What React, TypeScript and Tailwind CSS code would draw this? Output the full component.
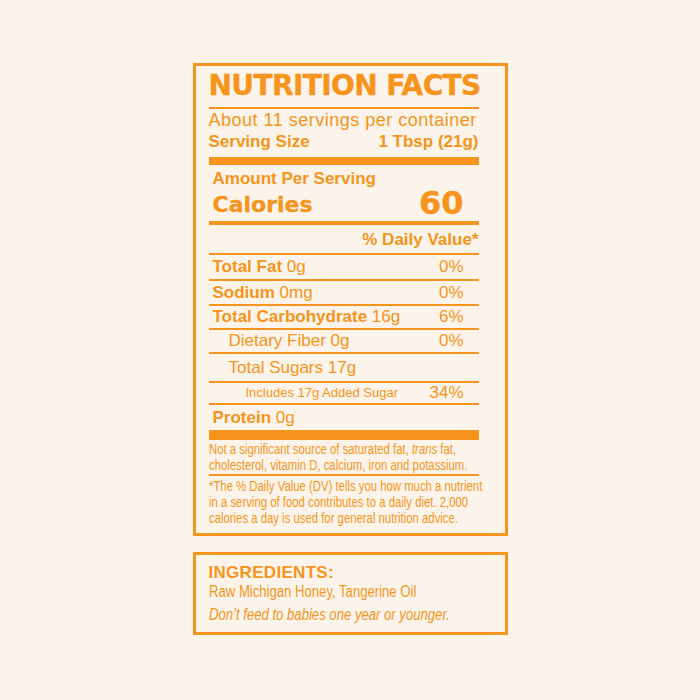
const orange = "text-[#f7941d]";

function Rule({ h = "h-[2px]" }: { h?: string }) {
  return <div className={`${h} bg-[#f7941d]`} />;
}

function Row({
  height,
  indent,
  children,
  pct,
}: {
  height: string;
  indent: string;
  children: React.ReactNode;
  pct?: string;
}) {
  return (
    <div className={`flex justify-between ${height} ${indent} pr-[15px]`}>
      <div>{children}</div>
      {pct && <div>{pct}</div>}
    </div>
  );
}

export default function App() {
  return (
    <div
      className={`w-[700px] h-[700px] bg-[#fcf4ea] flex flex-col items-center pt-[63px] gap-[16px] ${orange}`}
      style={{ fontFamily: '"Liberation Sans", Arial, sans-serif' }}
    >
      <div className="w-[315px] border-[3px] border-[#f7941d] pl-[13px] pr-[26px] pt-[4px] pb-[7px]">
        <div className="h-[32px] leading-[32px] text-[28px] font-bold tracking-[-0.6px] whitespace-nowrap font-['DejaVu_Sans',sans-serif] [-webkit-text-stroke:0.4px_#f7941d]">
          NUTRITION FACTS
        </div>
        <div className="h-[5px]" />
        <Rule />
        <div className="h-[22px] leading-[22px] text-[18px] tracking-[0.5px] whitespace-nowrap">
          About 11 servings per container
        </div>
        <div className="h-[22px] leading-[22px] text-[17px] font-bold flex justify-between whitespace-nowrap">
          <span>Serving Size</span>
          <span>1 Tbsp (21g)</span>
        </div>
        <div className="h-[4px]" />
        <Rule h="h-[8px]" />
        <div className="h-[28px] leading-[28px] text-[17px] font-bold pl-[4px]">
          Amount Per Serving
        </div>
        <div className="h-[28px] flex items-end justify-between pl-[4px] pr-[15px] font-['DejaVu_Sans',sans-serif] font-bold">
          <span className="text-[22px] leading-[33px] [-webkit-text-stroke:0.3px_#f7941d]">Calories</span>
          <span className="text-[32px] leading-[36px] [-webkit-text-stroke:0.4px_#f7941d]">60</span>
        </div>
        <Rule h="h-[4px]" />
        <div className="h-[28px] leading-[30px] text-[17px] font-bold text-right">
          % Daily Value*
        </div>
        <Rule />
        <div className="text-[17px]">
          <Row height="h-[24px] leading-[24px]" indent="pl-[4px]" pct="0%">
            <b>Total Fat</b> 0g
          </Row>
          <Rule />
          <Row height="h-[23px] leading-[23px]" indent="pl-[4px]" pct="0%">
            <b>Sodium</b> 0mg
          </Row>
          <Rule />
          <Row height="h-[22px] leading-[22px]" indent="pl-[4px]" pct="6%">
            <b>Total Carbohydrate</b> 16g
          </Row>
          <Rule />
          <Row height="h-[22px] leading-[22px]" indent="pl-[20px]" pct="0%">
            Dietary Fiber 0g
          </Row>
          <Rule />
          <Row height="h-[27px] leading-[27px]" indent="pl-[20px]">
            Total Sugars 17g
          </Row>
          <Rule />
          <div className="flex justify-between h-[20px] leading-[20px] pl-[37px] pr-[15px]">
            <span className="text-[13px]">Includes 17g Added Sugar</span>
            <span>34%</span>
          </div>
          <Rule />
          <Row height="h-[25px] leading-[25px]" indent="pl-[4px]">
            <b>Protein</b> 0g
          </Row>
        </div>
        <Rule h="h-[10px]" />
        <div className="text-[14px] leading-[16px] whitespace-nowrap">
          <div className="pt-[1px] pb-[1px] origin-left scale-x-[0.81]">
            Not a significant source of saturated fat, <i>trans</i> fat,
            <br />
            cholesterol, vitamin D, calcium, iron and potassium.
          </div>
          <Rule />
          <div className="pt-[2px] origin-left scale-x-[0.81]">
            *The % Daily Value (DV) tells you how much a nutrient
            <br />
            in a serving of food contributes to a daily diet. 2,000
            <br />
            calories a day is used for general nutrition advice.
          </div>
        </div>
      </div>

      <div className="w-[315px] border-[3px] border-[#f7941d] pl-[13px] pr-[26px] pt-[8px] pb-[7px]">
        <div className="h-[20px] leading-[20px] text-[17px] font-bold tracking-[0.3px]">
          INGREDIENTS:
        </div>
        <div className="text-[16px] whitespace-nowrap">
          <div className="h-[18px] leading-[18px] origin-left scale-x-[0.82]">Raw Michigan Honey, Tangerine Oil</div>
          <div className="h-[4px]" />
          <div className="h-[20px] leading-[20px] italic origin-left scale-x-[0.82]">Don’t feed to babies one year or younger.</div>
        </div>
      </div>
    </div>
  );
}
